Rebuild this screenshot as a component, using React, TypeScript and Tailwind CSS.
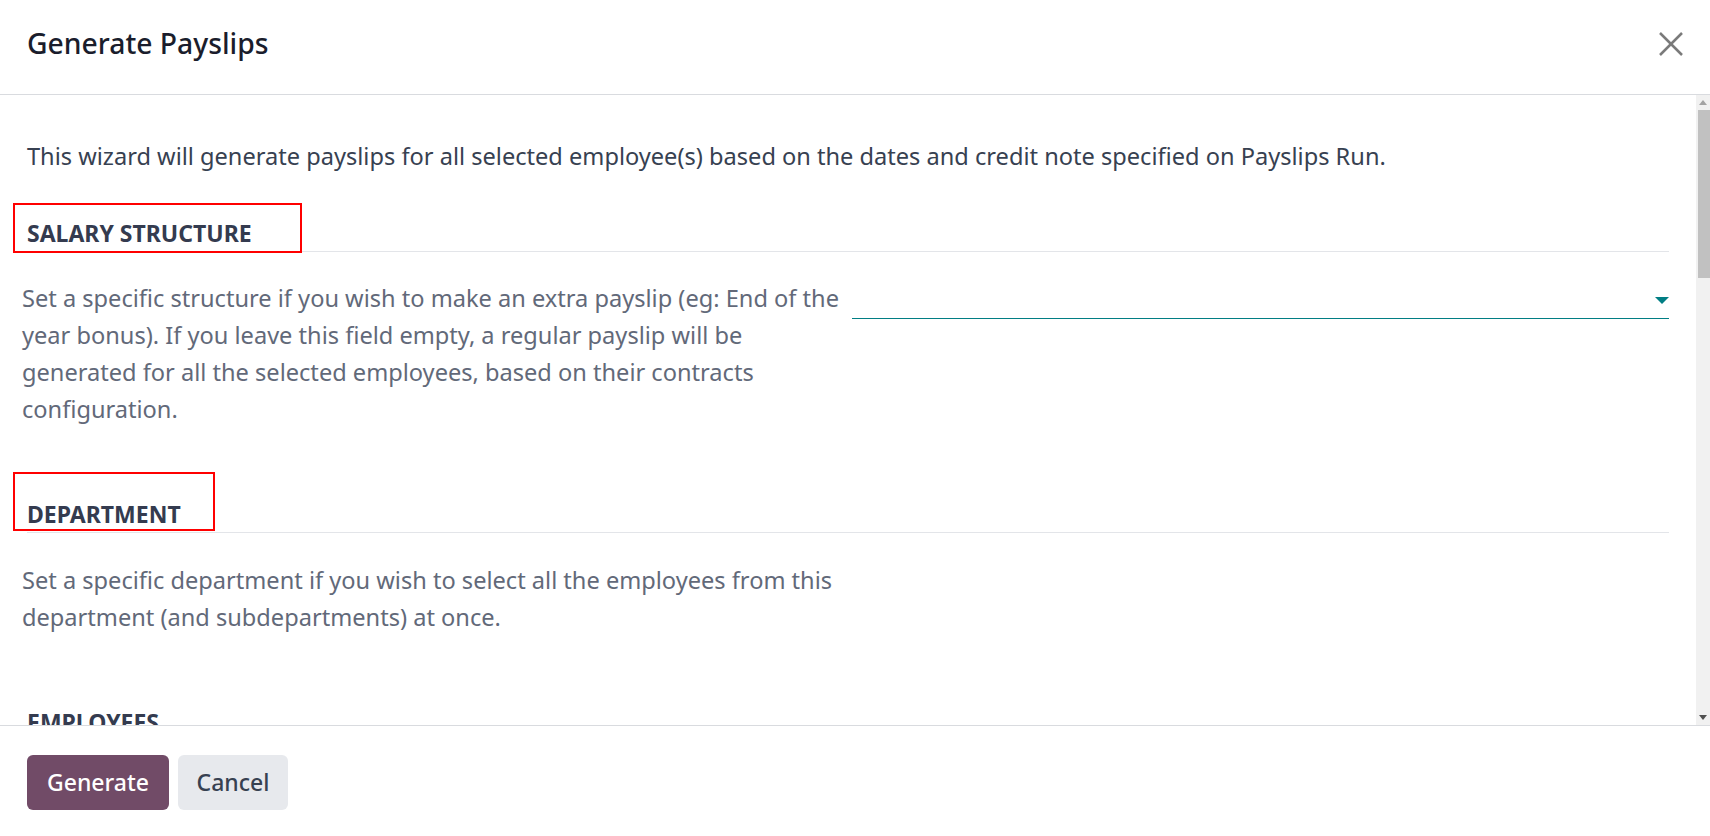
import React from "react";

const FONT = { fontFamily: '"Noto Sans", "Open Sans", sans-serif' };

function Heading({ children, box }: { children: React.ReactNode; box?: string }) {
  return (
    <div className="relative border-b border-[#e3e5e9] pb-[3px]">
      <div className="text-[23px] leading-[30px] font-bold text-[#343b4f] uppercase">{children}</div>
      {box ? <div className={box} /> : null}
    </div>
  );
}

export default function App() {
  return (
    <div className="w-[1710px] h-[836px] bg-white flex flex-col overflow-hidden" style={FONT}>
      {/* header */}
      <div className="h-[95px] shrink-0 border-b border-[#d9dbdf] flex items-center justify-between pl-[27px] pr-[26px] pb-[7px]">
        <div className="text-[28.3px] font-medium text-[#1a1d2c]">Generate Payslips</div>
        <svg width="26" height="26" viewBox="0 0 26 26" className="text-[#7a7a7a]">
          <line x1="2" y1="2" x2="24" y2="24" stroke="currentColor" strokeWidth="2.5" />
          <line x1="24" y1="2" x2="2" y2="24" stroke="currentColor" strokeWidth="2.5" />
        </svg>
      </div>

      {/* body */}
      <div className="h-[630px] shrink-0 flex">
        <div className="flex-1 overflow-hidden pl-[27px] pr-[27px]">
          <div className="pt-[46px] text-[23.6px] leading-[30px] text-[#374151] whitespace-nowrap">
            This wizard will generate payslips for all selected employee(s) based on the dates and credit note specified on Payslips Run.
          </div>

          <div className="mt-[47px]">
            <Heading box="absolute left-[-14px] top-[-15px] w-[289px] h-[50px] border-2 border-[#ff0000]">Salary Structure</Heading>
          </div>
          <div className="mt-[28px] flex">
            <div className="w-[830px] shrink-0 ml-[-5px] text-[23.6px] leading-[37px] text-[#626979] whitespace-nowrap">
              Set a specific structure if you wish to make an extra payslip (eg: End of the
              <br />
              year bonus). If you leave this field empty, a regular payslip will be
              <br />
              generated for all the selected employees, based on their contracts
              <br />
              configuration.
            </div>
            <div className="flex-1">
              <div className="h-[39px] border-b border-[#017e84] flex items-center justify-end pt-[2px]">
                <svg width="14" height="7" viewBox="0 0 14 7">
                  <polygon points="0,0 14,0 7,7" fill="#017e84" />
                </svg>
              </div>
            </div>
          </div>

          <div className="mt-[71px]">
            <Heading box="absolute left-[-14px] top-[-27px] w-[202px] h-[59px] border-2 border-[#ff0000]">Department</Heading>
          </div>
          <div className="mt-[29px] flex">
            <div className="w-[830px] shrink-0 ml-[-5px] text-[23.6px] leading-[37px] text-[#626979] whitespace-nowrap">
              Set a specific department if you wish to select all the employees from this
              <br />
              department (and subdepartments) at once.
            </div>
            <div className="flex-1">
              <div className="h-[38px]" />
            </div>
          </div>

          <div className="mt-[71px]">
            <Heading>Employees</Heading>
          </div>
          <div className="mt-[28px] h-[200px]" />
        </div>

        {/* scrollbar */}
        <div className="w-[14px] shrink-0 bg-[#f1f1f1] flex flex-col items-stretch">
          <div className="h-[15px] flex items-center justify-center">
            <svg width="8" height="5" viewBox="0 0 8 5">
              <polygon points="0,5 8,5 4,0" fill="#a3a3a3" />
            </svg>
          </div>
          <div className="h-[168px] ml-[2px] bg-[#c1c1c1]" />
          <div className="flex-1" />
          <div className="h-[15px] flex items-center justify-center">
            <svg width="8" height="5" viewBox="0 0 8 5">
              <polygon points="0,0 8,0 4,5" fill="#505050" />
            </svg>
          </div>
        </div>
      </div>

      {/* footer */}
      <div className="flex-1 border-t border-[#d9dbdf] pl-[27px] pt-[29px] flex items-start gap-[9px]">
        <button className="h-[55px] w-[142px] rounded-[6px] bg-[#714b67] text-white text-[23px] font-medium">
          Generate
        </button>
        <button className="h-[55px] w-[110px] rounded-[6px] bg-[#e7e9ed] text-[#374151] text-[23px] font-medium">
          Cancel
        </button>
      </div>
    </div>
  );
}
